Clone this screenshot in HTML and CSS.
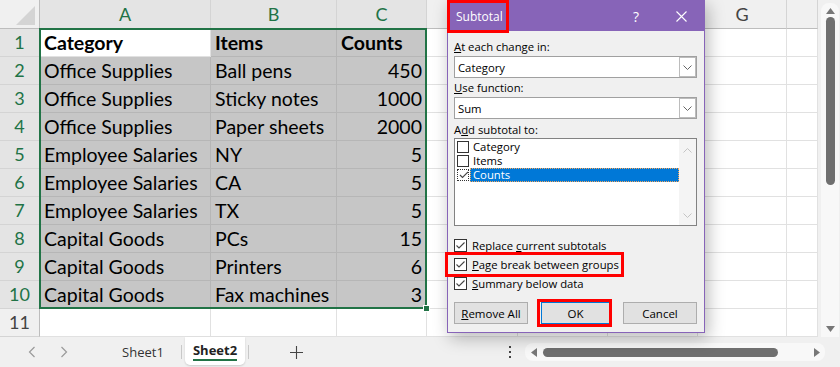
FILE: index.html
```html
<!DOCTYPE html>
<html lang="en">
  <head>
    <meta charset="UTF-8" />
    <title>Subtotal</title>
    <link rel="stylesheet" href="styles.css">
  </head>
  <body>
    <div class="app">
      <div class="main">
        <div class="grid">
          <div class="corner"><svg width="40" height="29"><polygon points="35,6 35,25 16,25" fill="#d4d4d4"/></svg></div>
          <div class="ch on">A</div><div class="ch on">B</div><div class="ch on">C</div><div class="ch"></div><div class="ch"></div><div class="ch"></div><div class="ch">G</div><div class="ch"></div>

          <div class="rh on">1</div><div class="c act b">Category</div><div class="c s b">Items</div><div class="c s b">Counts</div><div class="c"></div><div class="c"></div><div class="c"></div><div class="c"></div><div class="c"></div>
          <div class="rh on">2</div><div class="c s">Office Supplies</div><div class="c s">Ball pens</div><div class="c s n">450</div><div class="c"></div><div class="c"></div><div class="c"></div><div class="c"></div><div class="c"></div>
          <div class="rh on">3</div><div class="c s">Office Supplies</div><div class="c s">Sticky notes</div><div class="c s n">1000</div><div class="c"></div><div class="c"></div><div class="c"></div><div class="c"></div><div class="c"></div>
          <div class="rh on">4</div><div class="c s">Office Supplies</div><div class="c s">Paper sheets</div><div class="c s n">2000</div><div class="c"></div><div class="c"></div><div class="c"></div><div class="c"></div><div class="c"></div>
          <div class="rh on">5</div><div class="c s">Employee Salaries</div><div class="c s">NY</div><div class="c s n">5</div><div class="c"></div><div class="c"></div><div class="c"></div><div class="c"></div><div class="c"></div>
          <div class="rh on">6</div><div class="c s">Employee Salaries</div><div class="c s">CA</div><div class="c s n">5</div><div class="c"></div><div class="c"></div><div class="c"></div><div class="c"></div><div class="c"></div>
          <div class="rh on">7</div><div class="c s">Employee Salaries</div><div class="c s">TX</div><div class="c s n">5</div><div class="c"></div><div class="c"></div><div class="c"></div><div class="c"></div><div class="c"></div>
          <div class="rh on">8</div><div class="c s">Capital Goods</div><div class="c s">PCs</div><div class="c s n">15</div><div class="c"></div><div class="c"></div><div class="c"></div><div class="c"></div><div class="c"></div>
          <div class="rh on">9</div><div class="c s">Capital Goods</div><div class="c s">Printers</div><div class="c s n">6</div><div class="c"></div><div class="c"></div><div class="c"></div><div class="c"></div><div class="c"></div>
          <div class="rh on">10</div><div class="c s">Capital Goods</div><div class="c s">Fax machines</div><div class="c s n">3</div><div class="c"></div><div class="c"></div><div class="c"></div><div class="c"></div><div class="c"></div>
          <div class="rh">11</div><div class="c"></div><div class="c"></div><div class="c"></div><div class="c"></div><div class="c"></div><div class="c"></div><div class="c"></div><div class="c"></div>
        </div>

        <div class="vscroll">
          <div class="vtrack">
            <svg class="arrow-up" width="9" height="6"><polygon points="0,6 4.5,0 9,6" fill="#777"/></svg>
            <div class="vthumb"></div>
            <div class="fill"></div>
            <svg class="arrow-down" width="9" height="6"><polygon points="0,0 4.5,6 9,0" fill="#777"/></svg>
          </div>
        </div>
      </div>

      <div class="tabbar">
        <span class="nav"><svg width="8" height="12"><polyline points="6.5,1 1.5,6 6.5,11" fill="none" stroke="#9a9a9a" stroke-width="1.2"/></svg></span>
        <span class="nav"><svg width="8" height="12"><polyline points="1.5,1 6.5,6 1.5,11" fill="none" stroke="#9a9a9a" stroke-width="1.2"/></svg></span>
        <span class="tab">Sheet1</span>
        <span class="sep"></span>
        <span class="tab current">Sheet2</span>
        <span class="sep"></span>
        <span class="add"><svg width="13" height="13"><path d="M6.5 0v13M0 6.5h13" stroke="#444" stroke-width="1.1"/></svg></span>
        <span class="dots"><i></i><i></i><i></i></span>
        <div class="htrack">
          <svg width="6" height="9"><polygon points="6,0 0,4.5 6,9" fill="#777"/></svg>
          <div class="hthumb"></div>
          <div class="fill"></div>
          <svg width="6" height="9"><polygon points="0,0 6,4.5 0,9" fill="#777"/></svg>
        </div>
      </div>

      <!-- selected range A1:C10 -->
      <div class="selection"><span class="handle"></span></div>

      <div class="dialog">
        <div class="dlg-title">
          <span class="dlg-name">Subtotal</span>
          <span class="dlg-help">?</span>
          <span class="dlg-close"><svg width="11" height="11"><path d="M0.5 0.5l10 10M10.5 0.5l-10 10" stroke="#fff" stroke-width="1.1"/></svg></span>
        </div>
        <div class="dlg-body">
          <div class="lbl first"><u>A</u>t each change in:</div>
          <div class="combo"><span class="val">Category</span><span class="drop"><svg width="9" height="5"><polyline points="0.5,0.5 4.5,4.5 8.5,0.5" fill="none" stroke="#666"/></svg></span></div>
          <div class="lbl"><u>U</u>se function:</div>
          <div class="combo"><span class="val">Sum</span><span class="drop"><svg width="9" height="5"><polyline points="0.5,0.5 4.5,4.5 8.5,0.5" fill="none" stroke="#666"/></svg></span></div>
          <div class="lbl third">A<u>d</u>d subtotal to:</div>
          <div class="listbox">
            <div class="items">
              <div class="item"><span class="box"></span><span class="txt">Category</span></div>
              <div class="item"><span class="box"></span><span class="txt">Items</span></div>
              <div class="item"><span class="box focus"><svg width="12" height="12"><polyline points="2,6 4.5,8.5 10,3" fill="none" stroke="#444" stroke-width="1.1"/></svg></span><span class="txt hl">Counts</span></div>
            </div>
            <div class="lscroll">
              <svg width="9" height="5"><polyline points="0.5,4.5 4.5,0.5 8.5,4.5" fill="none" stroke="#c4c4c4"/></svg>
              <svg width="9" height="5"><polyline points="0.5,0.5 4.5,4.5 8.5,0.5" fill="none" stroke="#c4c4c4"/></svg>
            </div>
          </div>
          <div class="checks">
            <div class="chk"><span class="box"><svg width="11" height="11"><polyline points="1.5,5.5 4,8 9.5,2.5" fill="none" stroke="#444" stroke-width="1.1"/></svg></span><span>Replace <u>c</u>urrent subtotals</span></div>
            <div class="chk"><span class="box"><svg width="11" height="11"><polyline points="1.5,5.5 4,8 9.5,2.5" fill="none" stroke="#444" stroke-width="1.1"/></svg></span><span><u>P</u>age break between groups</span></div>
            <div class="chk"><span class="box"><svg width="11" height="11"><polyline points="1.5,5.5 4,8 9.5,2.5" fill="none" stroke="#444" stroke-width="1.1"/></svg></span><span><u>S</u>ummary below data</span></div>
          </div>
          <div class="btns">
            <button class="btn"><u>R</u>emove All</button>
            <button class="btn ok">OK</button>
            <button class="btn">Cancel</button>
          </div>
        </div>

        <!-- red call-outs -->
        <div class="mark mark-title"></div>
        <div class="mark mark-page"></div>
        <div class="mark mark-ok"></div>
      </div>
    </div>
  </body>
</html>
```

FILE: styles.css
```css
* {
  box-sizing: border-box;
  margin: 0;
  padding: 0;
}

body {
  width: 840px;
  height: 367px;
  overflow: hidden;
  background: #f0f0f0;
  font-family: 'Open Sans', sans-serif;
}

.app {
  position: relative;
  width: 840px;
  height: 367px;
}

.main {
  display: flex;
  height: 337px;
}

/* sheet */
.grid {
  display: grid;
  grid-template-columns: 40px 171px 126px 90px 91px 90px 90px 89px 31px;
  grid-template-rows: 29px repeat(11, 28px);
  background: #fff;
}

.grid > div {
  border-right: 1px solid #e1e1e1;
  border-bottom: 1px solid #e1e1e1;
}

.corner,
.ch,
.rh {
  background: #f0f0f0;
  font-family: 'Lato', sans-serif;
  color: #444;
}

.grid > .corner {
  border-right-color: #bdbdbd;
  border-bottom-color: #bdbdbd;
}

.corner svg {
  display: block;
}

.ch {
  font-size: 18px;
  line-height: 28px;
  text-align: center;
}

.grid > .ch {
  border-right-color: #d4d4d4;
  border-bottom-color: #bdbdbd;
}

.rh {
  font-size: 18px;
  line-height: 27px;
  text-align: center;
}

.grid > .rh {
  border-right-color: #bdbdbd;
  border-bottom-color: #d4d4d4;
}

.ch.on,
.rh.on {
  background: #e4e4e4;
  color: #217346;
}

.c {
  font-family: 'Lato', sans-serif;
  font-size: 19.5px;
  line-height: 27px;
  padding: 0 4px;
  color: #000;
  white-space: nowrap;
  overflow: hidden;
}

.c.b {
  font-weight: bold;
}

.c.n {
  text-align: right;
}

.grid > .c.s {
  background: #c6c6c6;
  border-color: #b6b6b6;
}

.selection {
  position: absolute;
  left: 39px;
  top: 28px;
  width: 388px;
  height: 281px;
  border: 2px solid #217346;
}

.handle {
  position: absolute;
  right: -5px;
  bottom: -5px;
  width: 7px;
  height: 7px;
  background: #217346;
  border: 1px solid #fff;
}

/* vertical scrollbar */
.vscroll {
  width: 22px;
  padding: 3px 1px 0 3px;
  background: #f0f0f0;
}

.vtrack {
  display: flex;
  flex-direction: column;
  align-items: center;
  height: 100%;
  background: #f8f8f8;
  border-radius: 8px 8px 0 0;
}

.arrow-up {
  margin-top: 5px;
}

.vthumb {
  width: 9px;
  height: 168px;
  margin-top: 3px;
  background: #6f6f6f;
  border-radius: 5px;
}

.fill {
  flex: 1;
}

.arrow-down {
  margin-bottom: 5px;
}

/* sheet tabs */
.tabbar {
  display: flex;
  align-items: center;
  height: 30px;
  padding-left: 16px;
  font-family: 'Open Sans', sans-serif;
  font-size: 13px;
  color: #333;
}

.nav {
  display: flex;
  justify-content: center;
  width: 32px;
}

.tab {
  width: 70px;
  margin-left: 28px;
  text-align: center;
}

.tab.current {
  position: relative;
  align-self: flex-start;
  width: 60px;
  height: 28px;
  margin-left: 3px;
  padding-top: 4px;
  background: #fff;
  border-radius: 0 0 5px 5px;
  box-shadow: 0 1px 2px rgba(0, 0, 0, 0.15);
  font-weight: bold;
  color: #222;
}

.tab.current::after {
  content: "";
  position: absolute;
  left: 8px;
  right: 8px;
  top: 22px;
  height: 2px;
  background: #217346;
}

.sep {
  width: 1px;
  height: 14px;
  margin-left: 1px;
  background: #c8c8c8;
}

.tab + .sep {
  margin-left: 3px;
}

.add {
  display: flex;
  justify-content: center;
  width: 30px;
  margin-left: 32px;
}

.dots {
  display: flex;
  flex-direction: column;
  align-items: center;
  gap: 3px;
  width: 14px;
  margin-left: 192px;
}

.dots i {
  width: 2px;
  height: 2px;
  background: #444;
}

.htrack {
  display: flex;
  align-items: center;
  width: 300px;
  height: 18px;
  margin-left: 8px;
  padding: 0 5px 0 6px;
  background: #f8f8f8;
  border-radius: 8px;
}

.hthumb {
  width: 235px;
  height: 9px;
  margin-left: 6px;
  background: #6f6f6f;
  border-radius: 5px;
}

/* Subtotal dialog */
.dialog {
  position: absolute;
  left: 447px;
  top: 0;
  width: 258px;
  height: 333px;
  background: #f0f0f0;
  border: 1px solid #8764b8;
  box-shadow: 3px 5px 16px rgba(0, 0, 0, 0.28);
  font-family: 'Open Sans', sans-serif;
  font-size: 11.3px;
  color: #000;
}

.dlg-title {
  display: flex;
  align-items: center;
  height: 30px;
  padding-left: 8px;
  background: #8764b8;
  color: #fff;
  font-size: 12px;
}

.dlg-help {
  width: 30px;
  margin-left: auto;
  text-align: center;
  font-size: 14px;
}

.dlg-close {
  display: flex;
  justify-content: center;
  width: 30px;
  margin: 0 8px 0 15px;
}

.dlg-body {
  padding: 0 7px 0 6px;
}

.lbl {
  height: 14px;
  line-height: 14px;
  margin: 3px 0 2px;
}

.lbl.first {
  margin-top: 9px;
}

.lbl.third {
  margin: 4px 0 1px;
}

.combo {
  display: flex;
  align-items: center;
  height: 22px;
  background: #fff;
  border: 1px solid #a0a0a0;
}

.combo .val {
  flex: 1;
  padding-left: 3px;
}

.combo .drop {
  display: flex;
  align-items: center;
  justify-content: center;
  width: 17px;
  height: 20px;
  border: 1px solid #bcbcbc;
}

.listbox {
  display: flex;
  height: 88px;
  background: #fff;
  border: 1px solid #828282;
}

.items {
  flex: 1;
  padding: 1px 0 0 2px;
}

.item {
  display: flex;
  align-items: center;
  height: 14px;
}

.box {
  display: flex;
  align-items: center;
  justify-content: center;
  width: 12px;
  height: 12px;
  background: #fff;
  border: 1px solid #333;
}

.box.focus {
  border-style: dotted;
}

.txt {
  flex: 1;
  height: 14px;
  line-height: 14px;
  margin-left: 1px;
  padding-left: 3px;
}

.txt.hl {
  background: #0078d7;
  color: #fff;
  outline: 1px dotted #f5a65b;
  outline-offset: -1px;
}

.lscroll {
  display: flex;
  flex-direction: column;
  align-items: center;
  justify-content: space-between;
  width: 17px;
  padding: 9px 0 7px;
  background: #f4f4f4;
}

.checks {
  margin-top: 10px;
}

.chk {
  display: flex;
  align-items: center;
  height: 19px;
}

.chk .box {
  width: 13px;
  height: 13px;
  margin-right: 5px;
}

.btns {
  display: flex;
  justify-content: space-between;
  margin-top: 9px;
}

.btn {
  width: 74px;
  height: 22px;
  background: #e1e1e1;
  border: 1px solid #adadad;
  font-family: 'Open Sans', sans-serif;
  font-size: 11.5px;
  color: #000;
}

.btn.ok {
  width: 70px;
  border-color: #0078d7;
}

.mark {
  position: absolute;
  border: 3px solid #f00;
}

.mark-title {
  left: -1px;
  top: -1px;
  width: 62px;
  height: 33px;
}

.mark-page {
  left: -3px;
  top: 251px;
  width: 179px;
  height: 25px;
}

.mark-ok {
  left: 89px;
  top: 298px;
  width: 75px;
  height: 28px;
}
```
